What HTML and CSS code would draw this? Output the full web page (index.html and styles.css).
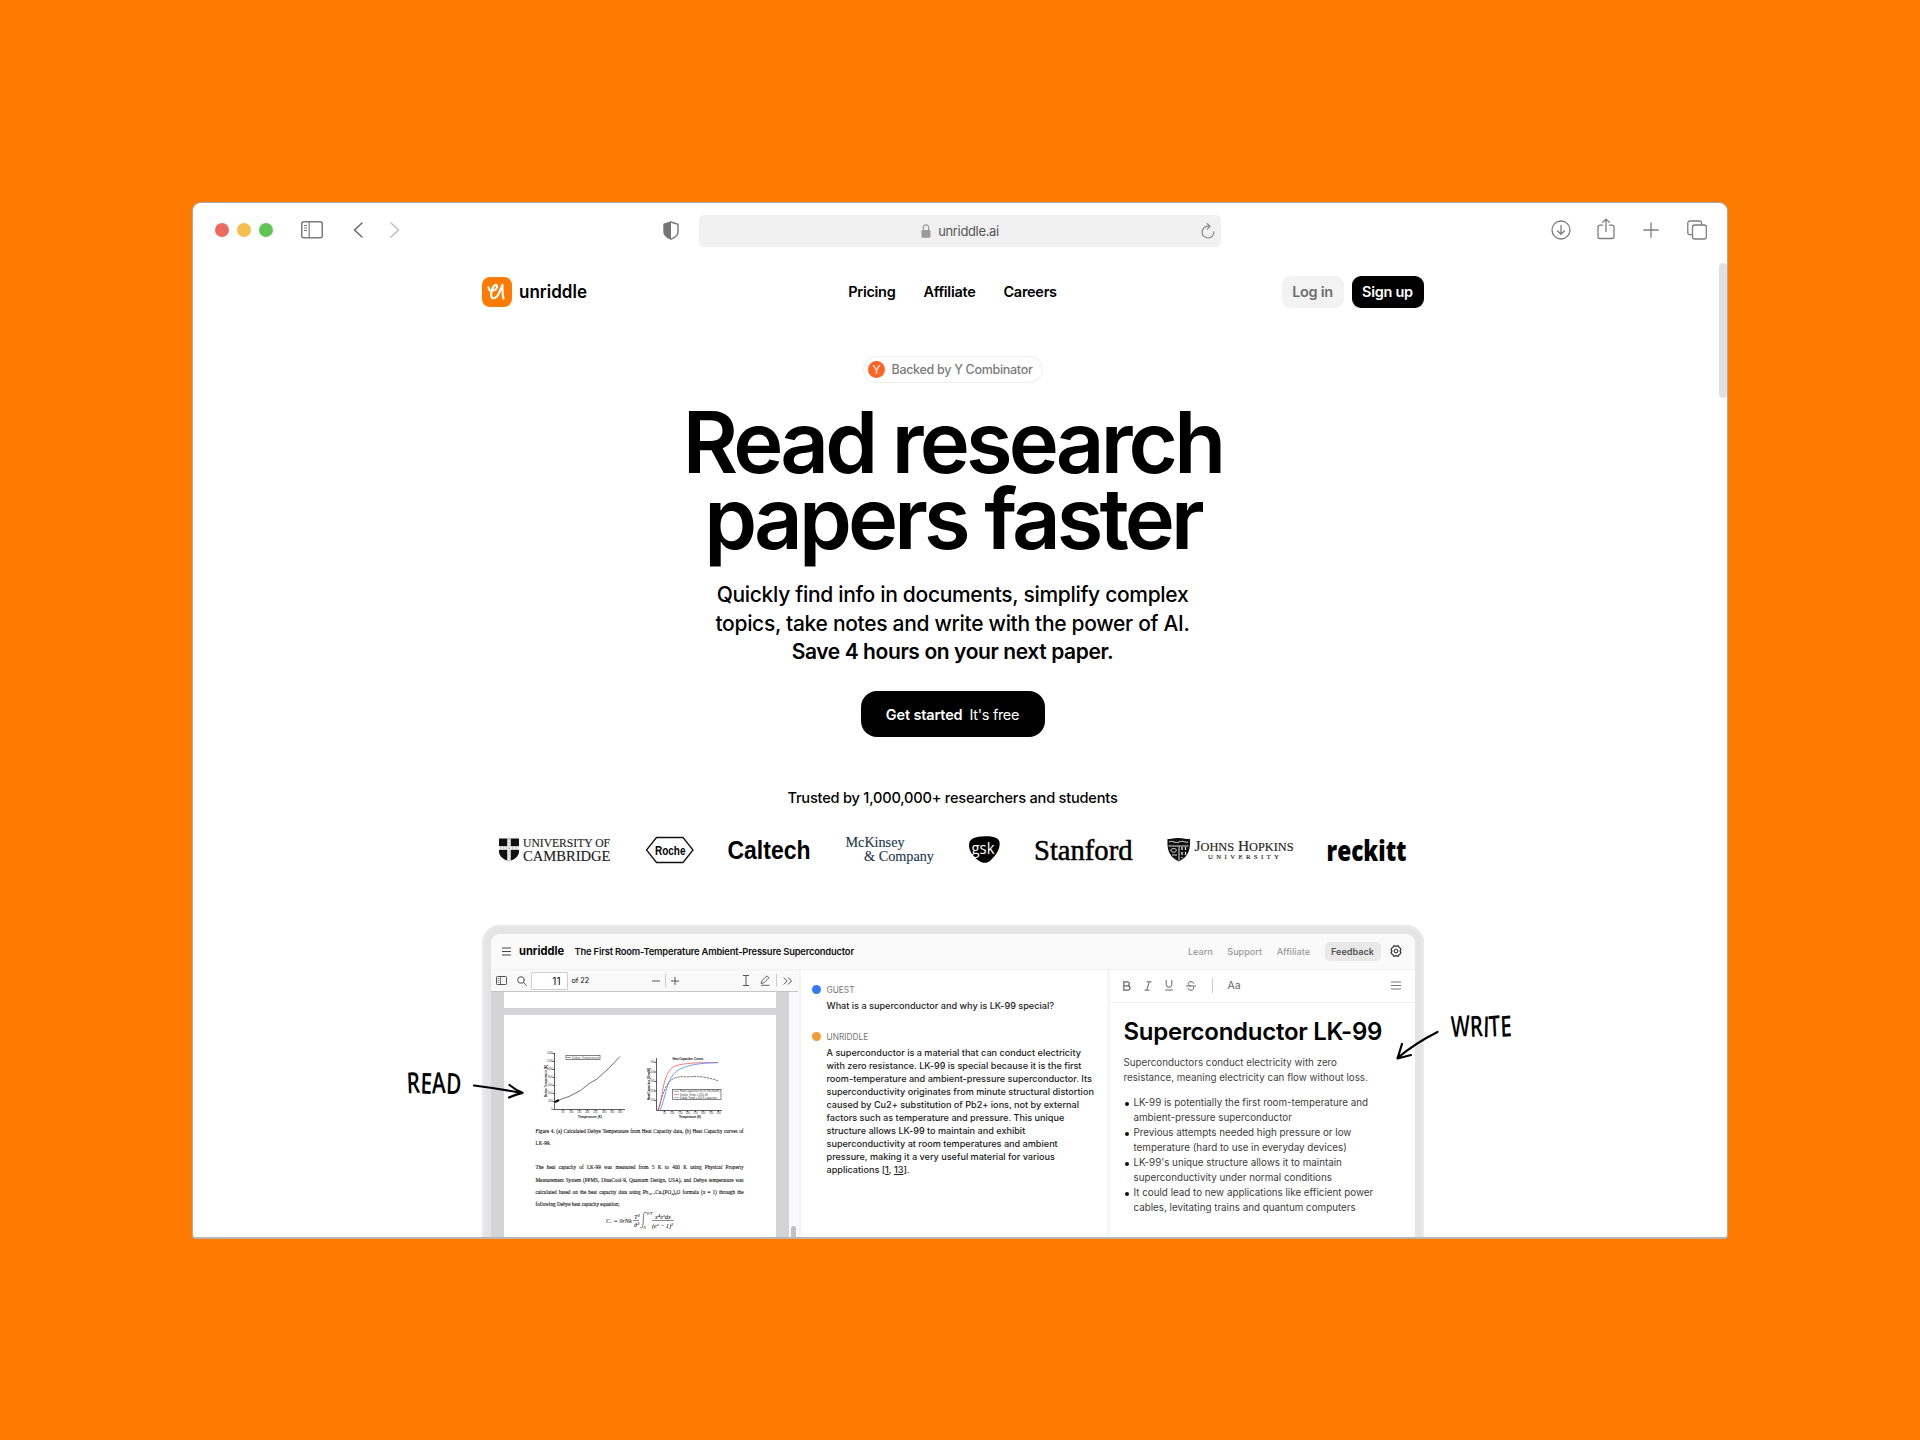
FILE: index.html
```html
<!DOCTYPE html>
<html lang="en">
<head>
<meta charset="utf-8">
<title>unriddle</title>
<link rel="stylesheet" href="styles.css">
</head>
<body>
<main class="window">
  <header class="chrome">
    <span class="light red"></span><span class="light yellow"></span><span class="light green"></span>
    <svg class="i-sidebar" width="22" height="18" viewBox="0 0 22 18" fill="none" stroke="#7b7b7b" stroke-width="1.5"><rect x=".75" y=".75" width="20.5" height="16" rx="2"/><path d="M8.200 1v15.500" stroke-width="1.2"/><path d="M3 4.500h3M3 7h3M3 9.500h3" stroke-width="1"/></svg>
    <svg class="i-back" width="10" height="16" viewBox="0 0 10 16" fill="none" stroke="#6b6b6b" stroke-width="1.6" stroke-linecap="round" stroke-linejoin="round"><path d="M9 1 1.500 8 9 15"/></svg>
    <svg class="i-fwd" width="10" height="16" viewBox="0 0 10 16" fill="none" stroke="#c0c0c0" stroke-width="1.6" stroke-linecap="round" stroke-linejoin="round"><path d="m1 1 7.500 7L1 15"/></svg>
    <svg class="i-shield" width="16" height="19" viewBox="0 0 16 19"><path d="M8 1 15 3.300V11c0 3.500-3.500 5.800-7 7.200C4.500 16.800 1 14.500 1 11V3.300Z" fill="#fff" stroke="#757575" stroke-width="1.400"/><path d="M8 1v17.200C4.500 16.800 1 14.500 1 11V3.300Z" fill="#757575"/></svg>
    <div class="url">
      <svg width="10" height="14" viewBox="0 0 10 14"><rect x=".5" y="6" width="9" height="7.700" rx="1.200" fill="#9b9b9b"/><path d="M2.300 6.500V3.700a2.700 2.900 0 0 1 5.400 0v2.800" fill="none" stroke="#9b9b9b" stroke-width="1.200"/></svg>
      <span class="host">unriddle.ai</span>
      <svg class="reload" width="14" height="16" viewBox="0 0 14 16" fill="none" stroke="#8a8a8a" stroke-width="1.200" stroke-linecap="round" stroke-linejoin="round"><path d="M12.900 8.800A5.900 5.900 0 1 1 7 3.200h1.800M6.300.700 9 3.300 6.300 6.200"/></svg>
    </div>
    <svg class="i-dl" width="20" height="20" viewBox="0 0 20 20" fill="none" stroke="#7d7d7d" stroke-width="1.300" stroke-linecap="round" stroke-linejoin="round"><circle cx="10" cy="10" r="9"/><path d="M10 5.500v8.700M6.600 11l3.400 3.300 3.400-3.300"/></svg>
    <svg class="i-share" width="18" height="22" viewBox="0 0 18 22" fill="none" stroke="#7d7d7d" stroke-width="1.300" stroke-linecap="round" stroke-linejoin="round"><path d="M5.500 7.200H3a2 2 0 0 0-2 2v9.300a2 2 0 0 0 2 2h12a2 2 0 0 0 2-2V9.200a2 2 0 0 0-2-2h-2.500M9 13.500V1.200M5.700 4.300 9 1.200l3.300 3.100"/></svg>
    <svg class="i-plus" width="16" height="16" viewBox="0 0 16 16" stroke="#7d7d7d" stroke-width="1.300" stroke-linecap="round"><path d="M8 .8v14.400M.8 8h14.400"/></svg>
    <svg class="i-tabs" width="20" height="20" viewBox="0 0 20 20" fill="none" stroke="#7d7d7d" stroke-width="1.300"><rect x="5.500" y="5" width="13.800" height="14" rx="2.200"/><path d="M5.500 14.700H2.800a2 2 0 0 1-2-2V3a2 2 0 0 1 2-2h9.700a2 2 0 0 1 2 2v2"/></svg>
  </header>
  <span class="scroll"></span>

  <div class="page">
    <nav class="nav">
      <div class="brand">
        <svg width="30" height="30" viewBox="0 0 30 30"><rect width="30" height="30" rx="8" fill="#ff7a00"/><path d="M6.300 10.700c.2 3.400 3 4 5.400 3.100 2.800-1 4.200-3.200 3.400-5-.7-1.300-2.800-.9-3.900 1.400-1.300 2.700-2.600 6.800-1.900 9.700.7 2.700 3.500 3 5.900.2 2-2.500 3.800-6.500 5.800-12.300-.2 5-.1 9.500 1 14.600" transform="translate(.5 .3) scale(.95)" fill="none" stroke="#fff" stroke-width="2.300" stroke-linecap="round" stroke-linejoin="round"/></svg>
        <svg width="69" height="26"><text x="0" y="19" textLength="68" lengthAdjust="spacingAndGlyphs" class="wordmark">unriddle</text></svg>
      </div>
      <div class="links"><a>Pricing</a><a>Affiliate</a><a>Careers</a></div>
      <div class="auth"><a class="login">Log in</a><a class="signup">Sign up</a></div>
    </nav>

    <div class="badge"><svg width="17" height="17" viewBox="0 0 17 17"><circle cx="8.500" cy="8.500" r="8.500" fill="#ff6422"/><text x="8.500" y="12.800" class="yc">Y</text></svg>Backed by Y Combinator</div>
    <h1>Read research<br>papers faster</h1>
    <p class="sub">Quickly find info in documents, simplify complex<br>topics, take notes and write with the power of AI.</p>
    <p class="save">Save 4 hours on your next paper.</p>
    <a class="cta"><b>Get started</b><span>It's free</span></a>
    <p class="trusted">Trusted by 1,000,000+ researchers and students</p>

    <div class="logos">
      <svg width="112" height="40" viewBox="499 830 112 40"><path d="M499 838.500h20v13c0 5-4.500 7.700-10 10-5.500-2.300-10-5-10-10Z" fill="#111"/><path d="M509 838.500v23M499 848h20" stroke="#fff" stroke-width="3.400"/><path d="M509 839v22M500 848h18" stroke="#777" stroke-width=".8" stroke-dasharray="1.500 1.500"/><g class="serif"><text x="523" y="846.800" font-size="12.500" textLength="87" lengthAdjust="spacingAndGlyphs">UNIVERSITY OF</text><text x="523" y="860.500" font-size="15.500" textLength="87.500" lengthAdjust="spacingAndGlyphs">CAMBRIDGE</text></g></svg>
      <svg width="49" height="40" viewBox="645 830 49 40"><path d="M656.500 837.500h26.500l10 12.500-10 12.500h-26.500l-10-12.500Z" fill="none" stroke="#111" stroke-width="1.300"/><text x="655" y="854.500" font-size="13.500" font-weight="700" class="sans" textLength="30.500" lengthAdjust="spacingAndGlyphs">Roche</text></svg>
      <svg width="82" height="40" viewBox="729 830 82 40"><text x="728.500" y="859" font-size="25.500" font-weight="700" class="sans" textLength="83" lengthAdjust="spacingAndGlyphs">Caltech</text></svg>
      <svg width="90" height="40" viewBox="845 830 90 40" class="serif mck"><text x="845.500" y="846.800" font-size="15.500" textLength="59" lengthAdjust="spacingAndGlyphs">McKinsey</text><text x="864" y="861" font-size="15.500" textLength="70" lengthAdjust="spacingAndGlyphs">&amp; Company</text></svg>
      <svg width="31" height="40" viewBox="970 830 31 40"><path d="M970 845c0-6.500 6-8.500 16-8.800 9-.3 14.700 1.800 14.700 7.300 0 6-3.700 11.500-8.700 16.500-3.500 3.500-8 3.800-12.500.5-5.500-4-9.500-9.500-9.500-15.500Z"/><text x="972.500" y="854" font-size="17" fill="#fff" class="opens" textLength="23" lengthAdjust="spacingAndGlyphs">gsk</text></svg>
      <svg width="98" height="40" viewBox="1035 830 98 40"><text x="1034" y="860.300" font-size="28.500" class="stan" textLength="98.500" lengthAdjust="spacingAndGlyphs">Stanford</text></svg>
      <svg width="127" height="40" viewBox="1168 830 127 40"><path d="M1168.500 839c4 0 7-1.500 11.500-1s7 1 11 1c.3 9 0 17-11.200 22.500-11.300-5.500-11.600-13.500-11.300-22.500Z" fill="#111"/><path d="M1170 842c4-2 6 2 10 0s6 1 9 0M1169.500 846h20M1180 846.500v14M1171.500 850c2-2 5-2 6 0-1 3-4 3-6 0M1173 855h5" stroke="#ddd" stroke-width="1" fill="none"/><path d="M1183 847v11M1186.500 847v8" stroke="#fff" stroke-width="1.200" stroke-dasharray="3 2"/><g class="serif"><text x="1195.500" y="851" font-size="15" textLength="99" lengthAdjust="spacingAndGlyphs">J<tspan font-size="12">OHNS</tspan> H<tspan font-size="12">OPKINS</tspan></text><text x="1209" y="859.300" font-size="6.800" textLength="71">UNIVERSITY</text></g></svg>
      <svg width="78" height="40" viewBox="1329 830 78 40"><text x="1327.500" y="860.500" font-size="28" font-weight="800" class="opens" textLength="80" lengthAdjust="spacingAndGlyphs">reckitt</text></svg>
    </div>

    <section class="device">
      <div class="app">
        <div class="apphead">
          <svg width="9" height="9" viewBox="0 0 9 9" stroke="#444" stroke-width="1"><path d="M0 1h9M0 4.500h9M0 8h9"/></svg>
          <svg class="appmark" width="46" height="16"><text x="0" y="11.700" textLength="45" lengthAdjust="spacingAndGlyphs">unriddle</text></svg>
          <span class="doctitle">The First Room-Temperature Ambient-Pressure Superconductor</span>
          <span class="menu"><a>Learn</a><a>Support</a><a>Affiliate</a><a class="fb">Feedback</a></span>
          <svg class="gear" width="12" height="12" viewBox="0 0 12 12" fill="none" stroke="#222"><path d="M3.500.9h1.600l.9.700.9-.7h1.600l.5 1.500 1.300.8.700 1.500L9.900 6l1.100 1.300-.7 1.500-1.300.8-.5 1.500H6.900L6 10.400l-.9.700H3.500L3 9.600l-1.300-.8L1 7.300 2.100 6 1 4.700l.7-1.500L3 2.400Z" stroke-width="1.100" stroke-linejoin="round"/><circle cx="6" cy="6" r="1.900"/></svg>
        </div>
        <div class="cols">
          <div class="pdf">
            <div class="pdfbar">
              <svg width="11" height="9" viewBox="0 0 11 9" fill="none" stroke="#555"><rect x=".5" y=".5" width="10" height="8" rx=".8"/><path d="M4.500.5v8M1.800 2.500h1.500M1.800 4.500h1.500M1.800 6.500h1.500" stroke-width=".8"/></svg>
              <svg class="p-search" width="10" height="10" viewBox="0 0 10 10" fill="none" stroke="#555" stroke-linecap="round"><circle cx="4" cy="4" r="3.300"/><path d="m6.500 6.500 3 3"/></svg>
              <span class="pageno">11</span><span class="of">of 22</span>
              <svg class="p-minus" width="8" height="8" viewBox="0 0 8 8" stroke="#555"><path d="M0 4h8"/></svg>
              <i class="sep"></i>
              <svg class="p-plus" width="8" height="8" viewBox="0 0 8 8" stroke="#555"><path d="M0 4h8M4 0v8"/></svg>
              <svg class="p-cur" width="6" height="11" viewBox="0 0 6 11" stroke="#555" fill="none"><path d="M0 .5h6M0 10.500h6M3 .5v10"/></svg>
              <svg class="p-pen" width="11" height="11" viewBox="0 0 11 11" stroke="#555" fill="none" stroke-width=".9" stroke-linejoin="round"><path d="M1 8.500 2 5.500 7 .8l2 2-5 5-3 .7ZM1 10.300h8.500"/></svg>
              <i class="sep s2"></i>
              <svg class="p-more" width="9" height="8" viewBox="0 0 9 8" stroke="#555" fill="none"><path d="m.7.5 3.500 3.500L.7 7.500M5 .5 8.500 4 5 7.500"/></svg>
            </div>
            <div class="pdfview">
              <div class="sheets">
                <div class="sheet prev"></div>
                <div class="sheet">
                  <svg class="charts" width="200" height="76" viewBox="536 1048 200 76">
                    <g fill="none" stroke="#333" stroke-width=".8">
                      <path d="M554.500 1053v56.500H625"/><path d="M552.500 1053.500h2M552.500 1061.500h2M552.500 1069.500h2M552.500 1077.500h2M552.500 1085.500h2M552.500 1093.500h2M552.500 1101.500h2M552.500 1109.500h2M563 1109.500v1.500M571 1109.500v1.500M579.500 1109.500v1.500M587.500 1109.500v1.500M596 1109.500v1.500M604 1109.500v1.500M612 1109.500v1.500M620 1109.500v1.500"/>
                      <path d="M555 1102q8-4 14-5.500 12-5 21-13.500l7-4q12-10 23-22.500" stroke-width=".7"/><path d="M555 1102l4-2" stroke="#000" stroke-width="2"/>
                      <rect x="566" y="1055.500" width="34" height="4" stroke-width=".6"/><path d="M567 1057.500h4" stroke-width=".5"/>
                      <path d="M656.500 1058v52.500H722"/><path d="M654.500 1062.500h2M654.500 1072h2M654.500 1081.500h2M654.500 1091h2M654.500 1100.500h2M664.500 1110.500v1.500M672 1110.500v1.500M680 1110.500v1.500M687.500 1110.500v1.500M695.500 1110.500v1.500M703 1110.500v1.500M711 1110.500v1.500M718.500 1110.500v1.500"/>
                      <path d="M658 1110c5-16 8-29 17-32q6-2 11-1 6-.6 12-.4 10 .4 20 4.200" stroke-width=".7" stroke-dasharray="2.500 .8"/>
                      <path d="M658 1110c5-6 3-38 17-44 8-3 25-3.500 43-3.500" stroke="#f25c5c" stroke-width=".8"/>
                      <path d="M660 1110c5-8 6-32 17-39 9-6 22-8 41-8.300" stroke="#5585f2" stroke-width=".8"/>
                      <rect x="672.500" y="1089.500" width="48.500" height="10" fill="#fff" stroke-width=".6"/>
                      <path d="M674 1091.300h5" stroke-width=".5"/><path d="M674 1094.500h5" stroke="#f04848" stroke-width=".6"/><path d="M674 1097.700h5" stroke="#3b72f0" stroke-width=".6"/>
                    </g>
                    <g class="ct">
                      <text x="572" y="1058.600" textLength="27">Debye Temperature</text>
                      <text x="578" y="1117.800" textLength="24" class="b">Temperature (K)</text><text x="679" y="1118.300" textLength="22" class="b">Temperature (K)</text>
                      <text x="672.500" y="1059.600" textLength="31" class="b">Heat Capacities Curves</text>
                      <text transform="translate(546.500 1097) rotate(-90)" textLength="32" class="b">Debye Temperature (K)</text>
                      <text transform="translate(649.500 1100) rotate(-90)" textLength="32" class="b">Heat Capacities (J/molK)</text>
                      <text x="680" y="1092.300" textLength="40">Heat Capacities of LK-99(J/molK)</text><text x="680" y="1095.500" textLength="28">Debye Temp = 350.0K</text><text x="680" y="1098.700" textLength="37">Debye Temp = 450 K capacities</text>
                      <text x="547" y="1054.400">1400</text><text x="547" y="1062.400">1200</text><text x="547" y="1070.400">1000</text><text x="548" y="1078.400">800</text><text x="548" y="1086.400">600</text><text x="548" y="1094.400">400</text><text x="548" y="1102.400">200</text><text x="551" y="1110.400">0</text>
                      <text x="561.500" y="1113.200">50</text><text x="569" y="1113.200">100</text><text x="577" y="1113.200">150</text><text x="585" y="1113.200">200</text><text x="593" y="1113.200">250</text><text x="602" y="1113.200">300</text><text x="610" y="1113.200">350</text><text x="618" y="1113.200">400</text>
                      <text x="650.500" y="1063.400">500</text><text x="650.500" y="1072.900">400</text><text x="650.500" y="1082.400">300</text><text x="650.500" y="1091.900">200</text><text x="650.500" y="1101.400">100</text>
                      <text x="663" y="1114.200">50</text><text x="670" y="1114.200">100</text><text x="678" y="1114.200">150</text><text x="685.500" y="1114.200">200</text><text x="693.500" y="1114.200">250</text><text x="701" y="1114.200">300</text><text x="709" y="1114.200">350</text><text x="716.500" y="1114.200">400</text>
                    </g>
                  </svg>
                  <div class="paper">
                    <p class="j">Figure 4. (a) Calculated Debye Temperature from Heat Capacity data, (b) Heat Capacity curves of</p>
                    <p class="gap">LK-99.</p>
                    <p class="j">The heat capacity of LK-99 was measured from 5 K to 400 K using Physical Property</p>
                    <p class="j">Measurement System (PPMS, DinaCool-9, Quantum Design, USA), and Debye temperature was</p>
                    <p class="j">calculated based on the heat capacity data using Pb₁₀₋ₓCuₓ(PO₄)₆O formula (x = 1) through the</p>
                    <p>following Debye heat capacity equation;</p>
                  </div>
                  <svg class="formula" width="70" height="20" viewBox="606 1212 70 20">
                    <text x="606" y="1225" textLength="26">Cᵥ = 9rNk</text><text x="634" y="1220.500">T³</text><text x="634" y="1229">θ³</text><path d="M633 1222.500h6M652 1222.500h22" stroke="#444" stroke-width=".6"/><path d="M646.500 1214.500c-2.500-1.200-3 1-3.200 7.500s-.8 8.500-3 7.500" fill="none" stroke="#333" stroke-width=".7"/><text x="646.500" y="1217" font-size="4.500">θ/T</text><text x="643.500" y="1231" font-size="4">0</text><text x="655" y="1220.500" textLength="16">x⁴eˣdx</text><text x="652" y="1229.500" textLength="21">(eˣ − 1)²</text>
                  </svg>
                </div>
              </div>
              <div class="track"><span></span></div>
            </div>
          </div>
          <div class="chat">
            <div class="who"><i class="dot blue"></i>GUEST</div>
            <p class="msg">What is a superconductor and why is LK-99 special?</p>
            <div class="who second"><i class="dot"></i>UNRIDDLE</div>
            <p class="msg">A superconductor is a material that can conduct electricity<br>with zero resistance. LK-99 is special because it is the first<br>room-temperature and ambient-pressure superconductor. Its<br>superconductivity originates from minute structural distortion<br>caused by Cu2+ substitution of Pb2+ ions, not by external<br>factors such as temperature and pressure. This unique<br>structure allows LK-99 to maintain and exhibit<br>superconductivity at room temperatures and ambient<br>pressure, making it a very useful material for various<br>applications [<u>1</u>, <u>13</u>].</p>
          </div>
          <div class="editor">
            <div class="edbar">
              <svg width="8" height="10" viewBox="0 0 8 10" fill="none" stroke="#666" stroke-width="1.200"><path d="M.8.800h3.500a2 2 0 0 1 0 4H.8V.8ZM.8 4.800h4a2.200 2.200 0 0 1 0 4.400h-4V4.800"/></svg>
              <svg width="8" height="10" viewBox="0 0 8 10" fill="none" stroke="#666"><path d="M2.500.8h5M.5 9.200h5M5.200.8 2.800 9.200"/></svg>
              <svg width="8" height="11" viewBox="0 0 8 11" fill="none" stroke="#666"><path d="M1.200 0v4.500a2.800 2.800 0 0 0 5.600 0V0M.3 10h7.400"/></svg>
              <svg width="10" height="10" viewBox="0 0 10 10" fill="none" stroke="#666"><path d="M7.800 2.700C7.500 1.300 6.500.7 5 .7 3.300.7 2.200 1.600 2.200 2.900c0 1 .8 1.700 2.800 2.100M0 5h10M7.500 6c.8 1.800-.5 3.300-2.500 3.300S2.200 8.300 2 7"/></svg>
              <i class="esep"></i><span class="aa">Aa</span>
              <svg class="lines" width="10" height="9" viewBox="0 0 10 9" stroke="#777"><path d="M0 1h10M0 4.500h10M0 8h10"/></svg>
            </div>
            <h2>Superconductor LK-99</h2>
            <p class="intro">Superconductors conduct electricity with zero<br>resistance, meaning electricity can flow without loss.</p>
            <ul>
              <li>LK-99 is potentially the first room-temperature and<br>ambient-pressure superconductor</li>
              <li>Previous attempts needed high pressure or low<br>temperature (hard to use in everyday devices)</li>
              <li>LK-99's unique structure allows it to maintain<br>superconductivity under normal conditions</li>
              <li>It could lead to new applications like efficient power<br>cables, levitating trains and quantum computers</li>
            </ul>
          </div>
        </div>
      </div>
    </section>
  </div>
  <svg class="note read" width="122" height="36" viewBox="405 1066 122 36"><text x="407" y="1093.500" rotate="-3 2 -2 3" textLength="54" lengthAdjust="spacingAndGlyphs">READ</text><path d="M474 1085.500q24 3 48 7.500M509.500 1085q6 5 13 7.800-7 1.500-13.500 4.700"/></svg>
  <svg class="note write" width="120" height="52" viewBox="1394 1011 120 52"><text x="1451" y="1037" rotate="-2 -3 2 -4 -3" textLength="61" lengthAdjust="spacingAndGlyphs">WRITE</text><path d="M1437.500 1032q-22 11-40 26M1402 1044l-4.500 14.500 13.500-3.500"/></svg>
</main>
</body>
</html>
```
FILE: styles.css
```css
* { box-sizing: border-box; }
body { margin: 0; background: #ff7a00; font-family: Inter, "Liberation Sans", sans-serif; color: #000; }
p, h1, h2, ul { margin: 0; padding: 0; font-weight: 400; }
svg { display: block; flex: none; overflow: visible; }

.window { position: relative; width: 1536px; height: 1037px; margin: 202px 0 0 192px; background: #fff; border: 1px solid #aaa; border-bottom: 2px solid #b5b5b5; border-radius: 9px 9px 4px 4px; overflow: hidden; }
.chrome { display: flex; align-items: center; height: 54px; padding: 0 20px 0 22px; }
.light { width: 14px; height: 14px; border-radius: 50%; margin-right: 8px; }
.red { background: #ec6a5e; }
.yellow { background: #f4bf4f; }
.green { background: #61c554; }
.i-sidebar { margin-left: 20px; }
.i-back { margin-left: 30px; }
.i-fwd { margin-left: 27px; }
.i-shield { margin-left: 263px; }
.url { position: relative; display: flex; align-items: center; justify-content: center; gap: 7px; width: 522px; height: 32px; margin: 2px 0 0 20px; background: #f1f1f1; border-radius: 5px; font-size: 13px; letter-spacing: -.35px; color: #555; }
.host { padding-bottom: 1px; }
.reload { position: absolute; right: 6px; top: 8px; }
.i-dl { margin-left: auto; }
.i-share { margin-left: 26px; margin-top: -2px; }
.i-plus { margin-left: 28px; }
.i-tabs { margin-left: 28px; }
.scroll { position: absolute; right: 0; top: 60px; width: 8px; height: 135px; border-radius: 4px; background: #e0e0e0; }

.page { display: flex; flex-direction: column; align-items: center; padding: 19px 15px 0 0; }
.nav { display: grid; grid-template-columns: 1fr auto 1fr; align-items: center; width: 942px; height: 32px; font-size: 14.5px; font-weight: 600; letter-spacing: -.28px; }
.brand { display: flex; align-items: center; gap: 7px; letter-spacing: 0; }
.wordmark { font-family: Inter, sans-serif; font-weight: 600; font-size: 18px; }
.links { display: flex; gap: 28px; padding-bottom: 1px; }
.auth { display: flex; justify-content: flex-end; gap: 8px; }
.login, .signup { display: flex; align-items: center; justify-content: center; height: 32px; width: 62px; padding-bottom: 1px; border-radius: 9px; }
.login { background: #f3f3f3; color: #6e6e6e; }
.signup { width: 72px; background: #000; color: #fff; }

.badge { display: flex; align-items: center; gap: 7px; height: 27px; width: 180px; margin-top: 48px; padding-left: 4px; border: 1px solid #eee; border-radius: 14px; font-size: 12.5px; font-weight: 500; letter-spacing: -.3px; color: #7b7b7b; white-space: nowrap; }
.yc { fill: #fff; font-size: 12px; font-weight: 400; letter-spacing: 0; text-anchor: middle; }
h1 { margin-top: 22px; font-size: 84.8px; line-height: 75.7px; font-weight: 600; letter-spacing: -3.85px; text-align: center; }
.sub { margin-top: 25px; font-size: 21px; line-height: 28.3px; font-weight: 450; letter-spacing: -.31px; text-align: center; white-space: nowrap; }
.save { font-size: 21px; line-height: 28.3px; font-weight: 600; letter-spacing: -.4px; }
.cta { display: flex; align-items: center; justify-content: center; gap: 7px; width: 184px; height: 46px; margin-top: 25px; border-radius: 16px; background: #000; color: #fff; font-size: 14.5px; letter-spacing: -.15px; }
.cta b { font-weight: 600; }
.cta span { letter-spacing: -.3px; }
.trusted { margin-top: 51px; font-size: 14.6px; line-height: 20px; font-weight: 450; letter-spacing: -.22px; }

.logos { display: flex; justify-content: space-between; width: 908px; height: 40px; margin-top: 21.5px; }
.serif { font-family: "Liberation Serif", serif; fill: #222; stroke: #222; stroke-width: .15px; }
.mck { fill: #1f3850; stroke: #1f3850; }
.stan { font-family: "Liberation Serif", serif; stroke: #000; stroke-width: .5px; }
.sans { font-family: "Liberation Sans", sans-serif; }
.opens { font-family: "Open Sans", sans-serif; }

.device { width: 942px; height: 330px; margin-top: 55px; padding: 9px; border-radius: 18px 18px 0 0; background: #e4e4e4; box-shadow: inset 0 0 4px 1px #ededed; }
.app { height: 100%; border-radius: 9px 9px 0 0; background: #fff; overflow: hidden; }
.apphead { display: flex; align-items: center; height: 36px; padding: 0 13px 0 11px; background: #fafafa; border-bottom: 1px solid #f1f1f1; }
.appmark { margin-left: 8px; font-size: 12px; font-weight: 700; }
.doctitle { margin-left: 10px; font-size: 9.4px; font-weight: 600; letter-spacing: -.19px; white-space: nowrap; color: #111; }
.menu { display: flex; align-items: center; gap: 14.5px; margin-left: auto; font-size: 9.1px; font-weight: 500; color: #999; }
.fb { display: flex; align-items: center; justify-content: center; width: 56px; height: 19px; background: #e9e9e9; border-radius: 5px; color: #555; font-weight: 600; }
.gear { margin-left: 9px; }
.cols { display: flex; height: 290px; }

.pdf { width: 310px; border-right: 2px solid #f3f3f3; background: #fafafa; }
.pdfbar { display: flex; align-items: center; height: 22px; width: 307px; padding: 1px 0 0 5px; border-bottom: 1px solid #c4c4c6; background: #f9f9fa; }
.p-search { margin-left: 10px; }
.pageno { width: 37px; height: 18px; margin-left: 4px; padding-right: 6px; border: 1px solid #ccc; border-radius: 1px; background: #fff; font-size: 10px; line-height: 17px; text-align: right; }
.of { margin-left: 4px; width: 18px; font-size: 7.3px; letter-spacing: -.1px; white-space: nowrap; }
.p-minus { margin-left: 62px; }
.sep { width: 1px; height: 13px; margin: 0 5px; background: #ccc; }
.p-cur { margin-left: 64px; }
.p-pen { margin-left: 11px; }
.s2 { margin-right: 6px; }
.pdfview { display: flex; height: 260px; }
.sheets { width: 298px; padding: 0 13px; background: #d4d4d8; }
.sheet { height: 250px; background: #fff; }
.prev { height: 16px; margin-bottom: 7px; }
.sheet:last-child { padding: 33px 32px 0; }
.ct { font: 2.6px "Liberation Sans", sans-serif; fill: #333; }
.b { font-weight: 700; font-size: 3px; fill: #111; }
.paper { margin-top: 1px; font: 5.2px/12.2px "Liberation Serif", serif; color: #111; -webkit-text-stroke: .1px #111; }
.paper p { height: 12.2px; white-space: nowrap; width: 208px; }
.paper .j { text-align-last: justify; }
.paper .gap { margin-bottom: 12.2px; }
.formula { margin-left: 70px; font: italic 6.5px "Liberation Serif", serif; }
.track { display: flex; flex: 1; align-items: flex-start; padding: 234px 0 0 2px; }
.track span { width: 5px; height: 40px; border-radius: 3px; background: #c1c1c1; }

.chat { width: 309px; border-right: 3px solid #f6f6f6; padding: 13px 0 0 11px; }
.who { display: flex; align-items: center; gap: 6px; height: 14px; font-size: 8.3px; color: #777; }
.dot { width: 9px; height: 9px; border-radius: 50%; background: #f39b3a; }
.blue { background: #3478f6; }
.second { margin-top: 18px; }
.msg { margin: 2px 0 0 15px; font-size: 9.14px; line-height: 13.07px; font-weight: 450; letter-spacing: -.01px; color: #1c1c1c; white-space: nowrap; }

.editor { flex: 1; }
.edbar { display: flex; align-items: center; gap: 13px; height: 33px; padding: 0 14px 0 13px; border-bottom: 1px solid #eee; }
.esep { width: 1px; height: 15px; margin: 0 2px 0 3px; background: #ccc; }
.aa { font-size: 10.5px; color: #666; }
.lines { margin-left: auto; }
h2 { margin: 14px 0 0 14px; font-size: 24px; line-height: 30px; font-weight: 600; letter-spacing: -.27px; white-space: nowrap; }
.intro { margin: 9px 0 0 14px; font-size: 9.77px; line-height: 14.8px; color: #444; white-space: nowrap; }
ul { margin: 11px 0 0 14px; list-style: none; font-size: 9.8px; line-height: 14.8px; color: #3c3c3c; white-space: nowrap; }
li { display: flex; margin-bottom: .4px; }
li::before { content: ""; flex: none; width: 4px; height: 4px; margin: 5.5px 5px 0 1px; border-radius: 50%; background: #111; }

.note { position: absolute; font: 600 29px "Open Sans", sans-serif; }
.note path { fill: none; stroke: #000; stroke-width: 2.2px; stroke-linecap: round; stroke-linejoin: round; }
.read { left: 212px; top: 863px; }
.write { left: 1201px; top: 808px; }
```
